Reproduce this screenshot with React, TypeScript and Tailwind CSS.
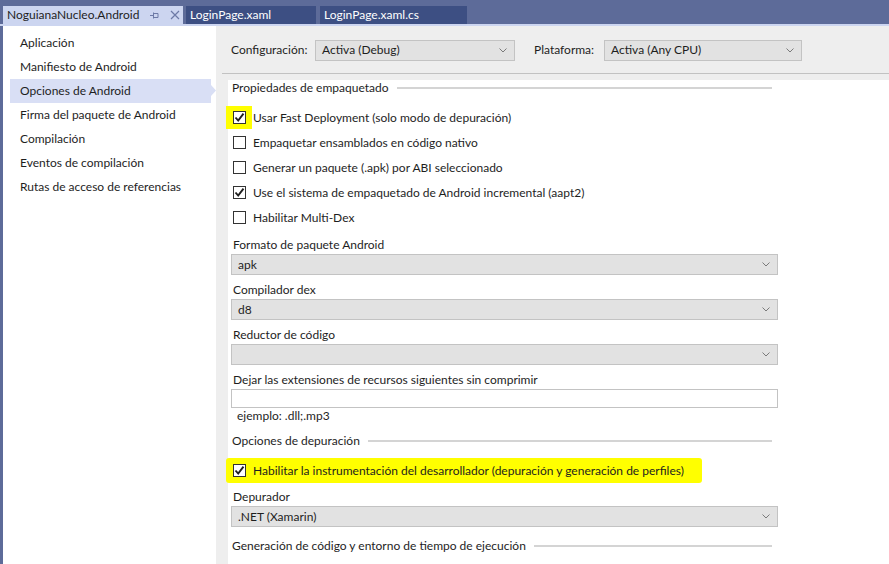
import React from 'react';

const Check = ({ checked }: { checked?: boolean }) => (
  <span className="w-[13px] h-[13px] border border-[#333333] bg-white flex items-center justify-center shrink-0">
    {checked && (
      <svg width="11" height="11" viewBox="0 0 11 11">
        <path d="M1.5 5.5 L4.2 8.6 L9.5 1.6" fill="none" stroke="#1e1e1e" strokeWidth="1.9" />
      </svg>
    )}
  </span>
);

const Chevron = () => (
  <svg width="8" height="5" viewBox="0 0 8 5" className="shrink-0">
    <path d="M0.5 0.5 L4 4 L7.5 0.5" fill="none" stroke="#7a7a7a" strokeWidth="1" />
  </svg>
);

const Select = ({ value, className = '' }: { value?: string; className?: string }) => (
  <div
    className={`h-[21px] bg-[#e2e2e2] border border-[#c3c3c3] flex items-center justify-between pl-[6px] pr-[7px] ${className}`}
  >
    <span>{value}</span>
    <Chevron />
  </div>
);

const SectionHeader = ({ title }: { title: string }) => (
  <div className="h-[16px] flex items-center gap-[8px] pl-[1px] pr-[6px]">
    <span className="whitespace-nowrap">{title}</span>
    <div className="flex-1 h-[2px] bg-[#d4d4d4]" />
  </div>
);

const CheckRow = ({ label, checked }: { label: string; checked?: boolean }) => (
  <div className="h-[25px] flex items-center gap-[7px] pl-[2px]">
    <Check checked={checked} />
    <span>{label}</span>
  </div>
);

const navItems = [
  'Aplicación',
  'Manifiesto de Android',
  'Opciones de Android',
  'Firma del paquete de Android',
  'Compilación',
  'Eventos de compilación',
  'Rutas de acceso de referencias',
];

export default function App() {
  return (
    <div className="w-[889px] h-[564px] overflow-hidden bg-[#5d6b99] flex flex-col text-[12px] text-[#1e1e1e] font-['Segoe_UI','Lato','Noto_Sans',sans-serif]">
      {/* Tabs */}
      <div className="h-[24px] flex items-end pl-[3px] gap-[3px] shrink-0">
        <div className="h-[18px] w-[180px] bg-[#ccd5f0] flex items-center pl-[4px] text-[#1e1e1e]">
          <span>NoguianaNucleo.Android</span>
          <svg width="9" height="9" viewBox="0 0 9 9" className="ml-[11px]">
            <path d="M0 4.5 H3 M3.5 1.5 V7.5 M3.5 2.5 H8 M3.5 6.5 H8 M8 2.5 V6.5" stroke="#6d7aa6" strokeWidth="1" fill="none" />
          </svg>
          <svg width="10" height="10" viewBox="0 0 10 10" className="ml-[11px]">
            <path d="M1 1 L9 9 M9 1 L1 9" stroke="#6d7aa6" strokeWidth="1.2" />
          </svg>
        </div>
        <div className="h-[18px] w-[130px] bg-[#3d4f83] text-white flex items-center pl-[4px]">LoginPage.xaml</div>
        <div className="h-[18px] w-[147px] bg-[#3d4f83] text-white flex items-center pl-[4px] ml-[1px]">LoginPage.xaml.cs</div>
      </div>
      <div className="h-[2px] bg-[#ccd5f0] shrink-0" />

      <div className="flex-1 flex pl-[3px] min-h-0">
        {/* Sidebar */}
        <aside className="w-[213px] bg-white pt-[5px] shrink-0">
          {navItems.map((item) =>
            item === 'Opciones de Android' ? (
              <div key={item} className="flex h-[24px] ml-[7px]">
                <div className="w-[201px] bg-[#d9dff5] flex items-center pl-[10px]">{item}</div>
                <svg width="5" height="24" viewBox="0 0 5 24">
                  <path d="M0 6 L5 11.5 L0 17 Z" fill="#d9dff5" />
                </svg>
              </div>
            ) : (
              <div key={item} className="h-[24px] flex items-center pl-[17px]">
                {item}
              </div>
            )
          )}
        </aside>

        {/* Content */}
        <div className="flex-1 bg-[#eeeeee] flex flex-col min-w-0">
          <div className="h-[47px] flex items-center pl-[15px] pt-[1px] shrink-0">
            <span className="w-[84px]">Configuración:</span>
            <Select value="Activa (Debug)" className="w-[200px]" />
            <span className="ml-[19px] w-[70px]">Plataforma:</span>
            <Select value="Activa (Any CPU)" className="w-[198px]" />
          </div>
          <div className="h-[1px] bg-[#c2c2c2] ml-[6px] shrink-0" />

          <div className="flex-1 bg-white ml-[12px] mt-[6px] flex flex-col">
            <div className="w-[550px] pl-[3px] flex flex-col">
              <SectionHeader title="Propiedades de empaquetado" />
              <div className="mt-[9px] flex flex-col">
                <div className="h-[25px] flex items-center gap-[7px] pl-[2px]">
                  <span className="bg-[#ffff00] -ml-[7px] pl-[7px] pr-[6px] py-[5px] -mr-[6px]">
                    <Check checked />
                  </span>
                  <span>Usar Fast Deployment (solo modo de depuración)</span>
                </div>
                <CheckRow label="Empaquetar ensamblados en código nativo" />
                <CheckRow label="Generar un paquete (.apk) por ABI seleccionado" />
                <CheckRow label="Use el sistema de empaquetado de Android incremental (aapt2)" checked />
                <CheckRow label="Habilitar Multi-Dex" />
              </div>

              <div className="mt-[7px] h-[16px] flex items-center pl-[2px]">Formato de paquete Android</div>
              <Select value="apk" className="mt-[1px]" />
              <div className="mt-[7px] h-[16px] flex items-center pl-[2px]">Compilador dex</div>
              <Select value="d8" className="mt-[1px]" />
              <div className="mt-[7px] h-[16px] flex items-center pl-[2px]">Reductor de código</div>
              <Select className="mt-[1px]" />
              <div className="mt-[7px] h-[16px] flex items-center pl-[2px]">Dejar las extensiones de recursos siguientes sin comprimir</div>
              <div className="mt-[1px] h-[19px] border border-[#c3c3c3] bg-white" />
              <div className="h-[16px] flex items-center pl-[6px]">ejemplo: .dll;.mp3</div>

              <div className="mt-[9px]">
                <SectionHeader title="Opciones de depuración" />
              </div>
              <div className="mt-[9px] h-[25px] w-[476px] -ml-[5px] bg-[#ffff00] rounded-[3px] flex items-center gap-[7px] pl-[7px]">
                <Check checked />
                <span>Habilitar la instrumentación del desarrollador (depuración y generación de perfiles)</span>
              </div>

              <div className="mt-[6px] h-[16px] flex items-center pl-[2px]">Depurador</div>
              <Select value=".NET (Xamarin)" className="mt-[1px] h-[20px]" />
              <div className="mt-[11px]">
                <SectionHeader title="Generación de código y entorno de tiempo de ejecución" />
              </div>
            </div>
          </div>
        </div>
      </div>
    </div>
  );
}
